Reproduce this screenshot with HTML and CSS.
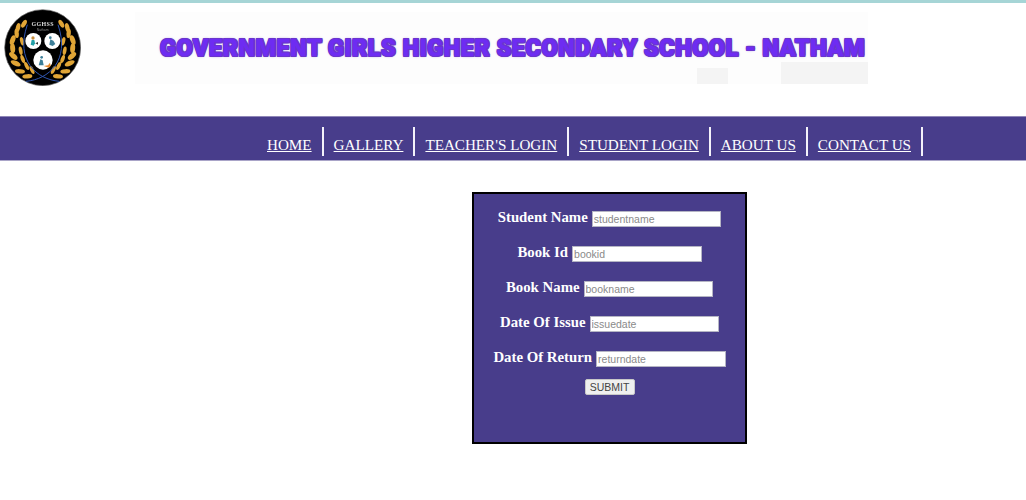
FILE: index.html
```html
<!DOCTYPE html>
<html lang="en">
<head>
<meta charset="utf-8">
<title>Government Girls Higher Secondary School - Natham</title>
<link rel="stylesheet" href="styles.css">
</head>
<body>
<header class="header">
  <svg class="logo" viewBox="0 0 252 252" width="84" height="84" aria-label="School logo">
    <circle cx="128" cy="131" r="114" fill="#000" stroke="#666" stroke-width="2"/>
    <g fill="#e0a536">
      <g id="laurel">
        <ellipse cx="72" cy="59" rx="6.5" ry="13" transform="rotate(30 72 59)"/>
        <ellipse cx="54" cy="71" rx="6.5" ry="14" transform="rotate(15 54 71)"/>
        <ellipse cx="50" cy="88" rx="6.5" ry="14" transform="rotate(-5 50 88)"/>
        <ellipse cx="38" cy="108" rx="7.5" ry="15" transform="rotate(20 38 108)"/>
        <ellipse cx="38" cy="133" rx="7.5" ry="15" transform="rotate(-5 38 133)"/>
        <ellipse cx="40" cy="156" rx="7.5" ry="15" transform="rotate(-50 40 156)"/>
        <ellipse cx="47" cy="178" rx="7.5" ry="16" transform="rotate(-65 47 178)"/>
        <ellipse cx="60" cy="202" rx="6.5" ry="15" transform="rotate(-85 60 202)"/>
        <ellipse cx="82" cy="217" rx="6.5" ry="15" transform="rotate(-95 82 217)"/>
        <ellipse cx="66" cy="112" rx="5.5" ry="13" transform="rotate(-15 66 112)"/>
        <ellipse cx="62" cy="140" rx="5.5" ry="13" transform="rotate(-10 62 140)"/>
        <ellipse cx="68" cy="165" rx="5.5" ry="13" transform="rotate(-20 68 165)"/>
        <ellipse cx="80" cy="186" rx="5.5" ry="13" transform="rotate(-25 80 186)"/>
        <ellipse cx="96" cy="198" rx="5.5" ry="13" transform="rotate(-25 96 198)"/>
      </g>
      <use href="#laurel" transform="matrix(-1 0 0 1 256 0)"/>
    </g>
    <g fill="none" stroke="#2f55b0" stroke-width="3">
      <path d="M178 232C110 226 45 170 82 62"/>
      <path d="M78 232C146 226 211 170 174 62"/>
    </g>
    <text class="logo-title" x="128" y="66" text-anchor="middle">GGHSS</text>
    <text class="logo-sub" x="128" y="82" text-anchor="middle">Natham</text>
    <g fill="#fff">
      <circle cx="100" cy="111" r="24"/>
      <circle cx="157" cy="111" r="24"/>
      <circle cx="129" cy="168" r="29"/>
    </g>
    <path d="M92 122l3-14h8l2 10-4 7z" fill="#23a0a8"/>
    <circle cx="99" cy="102" r="5" fill="#c58a3a"/>
    <path d="M106 118l8-4v8z" fill="#333"/>
    <path d="M148 122l3-16 9 4 6 10-8 6z" fill="#3d7f99"/>
    <circle cx="151" cy="101" r="4" fill="#3d7f99"/>
    <path d="M116 184l5-18 7 3 3 15z" fill="#3d7f99"/>
    <path d="M131 186l13-2 6-8 2 9-5 6z" fill="#e8892a"/>
    <circle cx="125" cy="160" r="4" fill="#3d7f99"/>
  </svg>
  <div class="banner"><h1 class="school-name">GOVERNMENT GIRLS HIGHER SECONDARY SCHOOL - NATHAM</h1></div>
</header>
<nav class="nav">
  <ul class="nav-list">
    <li class="nav-item"><a href="#">HOME</a></li>
    <li class="nav-item"><a href="#">GALLERY</a></li>
    <li class="nav-item"><a href="#">TEACHER'S LOGIN</a></li>
    <li class="nav-item"><a href="#">STUDENT LOGIN</a></li>
    <li class="nav-item"><a href="#">ABOUT US</a></li>
    <li class="nav-item"><a href="#">CONTACT US</a></li>
  </ul>
</nav>
<main class="main">
  <form class="issue-form">
    <div class="row"><label class="label">Student Name</label> <input class="field" type="text" placeholder="studentname"></div>
    <div class="row"><label class="label">Book Id</label> <input class="field" type="text" placeholder="bookid"></div>
    <div class="row"><label class="label">Book Name</label> <input class="field" type="text" placeholder="bookname"></div>
    <div class="row"><label class="label">Date Of Issue</label> <input class="field" type="text" placeholder="issuedate"></div>
    <div class="row"><label class="label">Date Of Return</label> <input class="field" type="text" placeholder="returndate"></div>
    <button class="submit" type="button">SUBMIT</button>
  </form>
</main>
</body>
</html>
```
FILE: styles.css
```css
html, body { margin: 0; padding: 0; background: #fff; }
body { font-family: "Liberation Serif", serif; overflow: hidden; height: 500px; }

.header {
  display: flex;
  align-items: flex-start;
  height: 113px;
  border-top: 3px solid #a6d5d6;
  box-sizing: content-box;
}
.logo { flex: none; margin: 1px 0 0 0; filter: blur(0.4px); }
.logo-title { fill: #ddd; font-family: "Liberation Serif", serif; font-weight: 700; font-size: 18px; letter-spacing: 1px; }
.logo-sub { fill: #888; font-family: "Liberation Sans", sans-serif; font-size: 10px; }
.banner {
  box-sizing: border-box;
  width: 733px;
  height: 72px;
  margin: 9px 0 0 51px;
  padding: 22px 0 0 25px;
  background-color: #fdfdfd;
  background-image: linear-gradient(#f4f4f4, #f4f4f4), linear-gradient(#f4f4f4, #f4f4f4);
  background-size: 31px 16px, 87px 22px;
  background-position: 562px 100%, 646px 100%;
  background-repeat: no-repeat;
}
.school-name {
  margin: 0;
  font-family: Roboto, sans-serif;
  font-weight: 900;
  font-size: 23.5px;
  line-height: 28px;
  white-space: nowrap;
  letter-spacing: 0.5px;
  color: #6e2cf2;
  text-shadow: 1px 0 0 #6a35cc, -1px 0 0 #6a35cc, 0 1px 0 #6a35cc, 0 -1px 0 #6a35cc,
    1px 1px 0 #6a35cc, -1px 1px 0 #6a35cc, 1px -1px 0 #6a35cc, -1px -1px 0 #6a35cc,
    0 0 3px #8a6ad8;
}

.nav {
  height: 43px;
  background: #483d8b;
  border-top: 1px solid #8f86b8;
  border-bottom: 1px solid #a9a4c8;
  box-sizing: content-box;
}
.nav-list {
  display: flex;
  list-style: none;
  margin: 0;
  padding: 10px 0 0 257px;
}
.nav-item {
  border-right: 2px solid #f4f2fa;
  padding: 0 10px;
  height: 29px;
  font-size: 15.15px;
  line-height: 35px;
}
.nav-item a { color: #fff; text-decoration: underline; }

.main { padding: 31px 0 0 472px; }
.issue-form {
  box-sizing: border-box;
  width: 275px;
  height: 252px;
  border: 2px solid #000;
  background: #483d8b;
  text-align: center;
  padding-top: 5px;
}
.row { height: 35px; line-height: 35px; white-space: nowrap; }
.label { color: #fff; font-weight: 700; font-size: 14.8px; }
.field {
  box-sizing: border-box;
  width: 129.5px;
  height: 16px;
  padding: 1px;
  border: 1px solid #b5b5c4;
  background: #fff;
  font-family: "Liberation Sans", sans-serif;
  font-size: 10.5px;
  vertical-align: -1px;
}
.field::placeholder { color: #8a8a8a; opacity: 1; }
.submit {
  display: block;
  box-sizing: border-box;
  width: 50px;
  height: 16px;
  margin: 5px auto 0;
  padding: 0;
  border: 1px solid #c8c8c8;
  border-radius: 2px;
  background: #efefef;
  color: #444;
  font-family: "Liberation Sans", sans-serif;
  font-size: 10.5px;
}
```
